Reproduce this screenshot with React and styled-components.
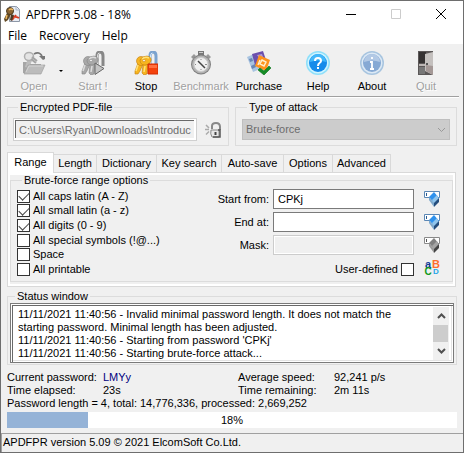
import React from 'react';
import styled, { createGlobalStyle, css } from 'styled-components';

const GlobalStyle = createGlobalStyle`
  * {
    box-sizing: border-box;
  }

  body {
    margin: 0;
    background-color: #f0f0f0;
    color: #000;
    font-family: 'Liberation Sans', sans-serif;
    font-size: 11px;
    line-height: 13px;
  }

  button, input, select, textarea {
    font: inherit;
    color: inherit;
  }
`;

const Window = styled.div`
  border: 1px solid #6e6e6e;
  background-color: #f0f0f0;
`;

const TitleBar = styled.header`
  height: 26px;
  padding-left: 3px;
  background-color: white;
  font-family: 'Open Sans', 'Noto Sans', sans-serif;
  font-size: 12px;

  display: flex;
  align-items: center;
  gap: 6px;
`;

const Title = styled.h1`
  flex: 1;
  margin: 0;
  font-size: 12px;
  font-weight: 400;
`;

const WindowControls = styled.div`
  display: flex;
`;

const WindowButton = styled.button`
  width: 45px;
  height: 24px;
  padding: 0;
  border: 0;
  background: none;

  display: flex;
  justify-content: center;
  align-items: center;
`;

const MenuBar = styled.nav`
  height: 17px;
  padding-left: 7px;
  background-color: white;
  font-family: 'Open Sans', 'Noto Sans', sans-serif;
  font-size: 12px;

  display: flex;
  gap: 12px;
`;

const MenuLink = styled.a`
  color: inherit;
  line-height: 17px;
  text-decoration: none;
`;

const Toolbar = styled.div`
  margin: 0 4px;
  padding: 7px 0 3px;
  border-bottom: 1px solid #a0a0a0;
  box-shadow: 0 1px white;

  display: grid;
  grid-template-columns: 58fr 60fr 46fr 64fr 52fr 66fr 42fr 66fr;
`;

const ToolButton = styled.button`
  min-width: 0;
  padding: 0;
  border: 0;
  background: none;
  white-space: nowrap;

  position: relative;
  display: flex;
  flex-direction: column;
  align-items: center;
  gap: 5px;

  &:disabled {
    color: #a0a0a0;
    text-shadow: 1px 1px white;
  }
`;

const DropMark = styled.span`
  border: 2px solid transparent;
  border-top-color: black;
  border-bottom: 0;

  position: absolute;
  top: 19px;
  right: 0;
`;

const Content = styled.main`
  padding: 4px 6px 5px;
`;

const Group = styled.fieldset`
  min-width: 0;
  margin: 0;
  padding: ${({ $padding }) => $padding};
  border: 1px solid #dcdcdc;

  legend {
    margin-left: 5px;
    padding: 0 2px;
  }
`;

const TopGroups = styled.div`
  margin-bottom: 6px;

  display: grid;
  grid-template-columns: 1fr 1fr;
  gap: 6px;
`;

const FileRow = styled.div`
  display: flex;
  align-items: center;
  gap: 8px;
`;

const FileInput = styled.input`
  flex: 1;
  min-width: 0;
  height: 23px;
  padding: 0 2px 0 5px;
  border: 1px solid #d0d0d0;
  background-color: #f0f0f0;
  box-shadow: inset 1px 1px white, inset -2px -2px white,
    inset 2px 2px #696969;

  &:disabled {
    color: #6d6d6d;
  }
`;

const IconButton = styled.button`
  padding: 0;
  border: 0;
  background: none;

  svg {
    display: block;
  }
`;

const SelectBox = styled.div`
  position: relative;

  svg {
    position: absolute;
    top: 8px;
    right: 4px;
    pointer-events: none;
  }
`;

const Select = styled.select`
  display: block;
  width: 100%;
  height: 21px;
  padding: 0 3px;
  border: 1px solid #bfbfbf;
  border-radius: 0;
  background-color: #cccccc;
  appearance: none;

  &:disabled {
    color: #6d6d6d;
    opacity: 1;
  }
`;

const TabList = styled.div`
  height: 20px;

  display: flex;
  align-items: flex-end;
`;

const Tab = styled.button`
  width: ${({ $width }) => $width}px;
  height: 18px;
  padding: 0;
  border: 1px solid #d9d9d9;
  border-width: 1px 1px 0 0;
  background-color: #f0f0f0;
  white-space: nowrap;

  ${({ $active }) =>
    $active &&
    css`
      height: 21px;
      margin-bottom: -1px;
      padding-bottom: 2px;
      border-left-width: 1px;
      background-color: white;
      z-index: 1;
    `}
`;

const TabPanel = styled.section`
  margin: 0 1px 3px 0;
  padding: 1px 2px 4px 2px;
  border: 1px solid #d9d9d9;
  box-shadow: inset 0 0 0 2px white;
`;

const RangeLayout = styled.div`
  display: flex;
  justify-content: space-between;
`;

const CheckList = styled.div`
  height: 88px;

  display: grid;
  grid-template-rows: repeat(6, 1fr);
`;

const CheckLabel = styled.label`
  white-space: nowrap;

  display: flex;
  flex-direction: ${({ $reverse }) => ($reverse ? 'row-reverse' : 'row')};
  align-items: center;
  gap: 3px;
`;

const Checkbox = styled.input`
  width: 13px;
  height: 13px;
  margin: 0;
  border: 1px solid #333;
  background-color: white;
  appearance: none;

  display: grid;
  place-items: center;

  &:checked::before {
    content: '';
    width: 9px;
    height: 5px;
    border: solid #444;
    border-width: 0 0 1px 1px;
    transform: translateY(-1px) rotate(-45deg);
  }
`;

const RangeForm = styled.div`
  display: grid;
  grid-template-columns: auto 141px 16px;
  grid-auto-rows: 20px;
  align-items: center;
  row-gap: 3px;
`;

const FieldLabel = styled.label`
  padding-right: 4px;
  text-align: right;
`;

const TextInput = styled.input`
  width: 100%;
  height: 20px;
  padding: 0 4px;
  border: 1px solid #7a7a7a;
  background-color: white;

  &:disabled {
    border-color: #cccccc;
    background-color: #f0f0f0;
    box-shadow: inset 0 0 0 1px white;
  }
`;

const UserDefined = styled.div`
  grid-column: 1 / 3;
  padding-top: 3px;

  display: flex;
  justify-content: flex-end;
`;

const FieldIcon = styled(IconButton)`
  margin-left: 10px;
`;

const LogBox = styled.div`
  height: 60px;
  padding: 3px 4px 2px 3px;
  border: 1px solid #7a7a7a;
  background-color: white;
  box-shadow: inset 1px 1px white, inset 2px 2px #696969,
    inset -1px -1px white, inset -2px -2px #e3e3e3;

  display: flex;
`;

const Log = styled.textarea`
  flex: 1;
  min-width: 0;
  padding: 1px 4px;
  border: 0;
  background: none;
  overflow: hidden;
  outline: 0;
  resize: none;
  white-space: pre;
`;

const ScrollBar = styled.div`
  width: 16px;
  background-color: #f0f0f0;

  display: flex;
  flex-direction: column;
`;

const ScrollButton = styled.button`
  height: 18px;
  padding: 0;
  border: 0;
  background: none;

  display: flex;
  justify-content: center;
  align-items: center;
`;

const ScrollTrack = styled.div`
  flex: 1;
`;

const ScrollThumb = styled.div`
  height: 17px;
  margin-right: 1px;
  background-color: #cdcdcd;
`;

const Stats = styled.dl`
  margin: 6px 0 2px;

  display: grid;
  grid-template-columns: 96fr 135fr 96fr 123fr;

  dt,
  dd {
    margin: 0;
    white-space: nowrap;
  }
`;

const Password = styled.dd`
  color: #000080;
`;

const Summary = styled.dt`
  grid-column: 1 / -1;
`;

const Progress = styled.div`
  height: 16px;
  background-color: white;

  display: grid;
  align-items: stretch;

  > * {
    grid-area: 1 / 1;
  }
`;

const ProgressFill = styled.div`
  background-color: #95b3d7;
`;

const ProgressText = styled.span`
  line-height: 16px;
  text-align: center;
`;

const StatusBar = styled.footer`
  height: 19px;
  padding: 2px 1px;
  border-top: 1px solid #a0a0a0;
  border-left: 1px solid #a0a0a0;
`;

const Keys = ({ gray }) => {
  const fill = gray ? '#a8a8a8' : '#f7b520';
  const light = gray ? '#dcdcdc' : '#ffe27a';
  const dark = gray ? '#858585' : '#c07c10';

  return (
    <>
      <path
        d='M16 14V5q0-4 3-4t3 4v10'
        fill='none'
        stroke={gray ? '#888' : '#7ba3cf'}
        strokeWidth='3'
      />
      <path
        d='M16.500 13V5q0-3 2-3'
        fill='none'
        stroke={gray ? '#ddd' : '#d5e8fa'}
        strokeWidth='1'
      />
      <g fill={fill} stroke={dark} strokeWidth='0.6'>
        <path d='M4 12 1 20l0 3 3 0 2-3 3-7z' />
        <path d='m9 13-1 9 2 2 3-1 1-10z' />
        <ellipse cx='7' cy='10' rx='4.500' ry='4.500' />
        <path d='M6 9q2-4 7-4 5 1 4 5t-6 4q-5 0-5-5z' />
      </g>
      <path
        d='M8 8q3-3 7-1M4 14l-2 6m9-5-1 6'
        fill='none'
        stroke={light}
        strokeWidth='1.500'
      />
      <circle cx='10' cy='9.500' r='1.200' fill='white' stroke={dark} strokeWidth='0.6' />
    </>
  );
};

const ToolIcon = ({ name }) => (
  <svg width='24' height='24' viewBox='0 0 24 24' aria-hidden='true'>
    {name === 'open' && (
      <>
        <path d='M1 11h6l2 2h10v9H1z' fill='#a6a6a6' />
        <path d='m5 10-2 6 3 1 4-7z' fill='#bdbdbd' />
        <ellipse cx='7' cy='5.500' rx='4.500' ry='4' fill='#e4e4e4' stroke='#b0b0b0' strokeWidth='1.500' />
        <path d='m9 8 5 4m-4-6 5 4' stroke='#a5a5a5' strokeWidth='2' />
        <path d='M12 3q5-3 8 2' fill='none' stroke='#777' strokeWidth='1.800' />
        <path d='M17 5h6v3l-2 1z' fill='#777' />
        <path d='M2 23 6 14h17l-4 9z' fill='#bcbcbc' stroke='#9c9c9c' strokeWidth='0.6' />
        <path d='m4 21 3-6h14' fill='none' stroke='#d3d3d3' />
      </>
    )}
    {name === 'start' && (
      <>
        <Keys gray />
        <path d='m14 12 9 5.500-9 6z' fill='#c4c4c4' stroke='#686868' />
      </>
    )}
    {name === 'stop' && (
      <>
        <Keys />
        <path d='M14 13h10v10H14z' fill='#f4420c' stroke='#d32c00' />
        <path d='M15 14h8v3h-8z' fill='#ff7040' />
      </>
    )}
    {name === 'benchmark' && (
      <>
        <path d='M9 0h6v4H9z' fill='#777' />
        <path d='M10 1h4v1h-4z' fill='#ccc' />
        <path d='m19 3 3 3-2 2-3-3zM5 3 2 6l2 2 3-3z' fill='#999' />
        <circle cx='12' cy='13.500' r='10' fill='#808080' />
        <circle cx='12' cy='13.500' r='9' fill='#b2b2b2' />
        <circle cx='12' cy='13.500' r='7' fill='#f0f0f0' stroke='#ccc' />
        <path d='m9 10 7 7' stroke='#444' strokeWidth='1.500' />
        <path d='M12 8v1m0 9v1m-6-5.500h1m9 0h2' stroke='#888' />
      </>
    )}
    {name === 'purchase' && (
      <>
        <path d='m0 6 7-3 6 15-7 3z' fill='#a9c4e1' />
        <path d='m2 8 3-1 1 3-3 1zm2 7 4-2 1 3-4 2z' fill='#6887b5' />
        <path d='m5 3 11-3 3 9-11 5z' fill='#6c50ad' />
        <path d='m10 4 5-1 1 3-4 1z' fill='#b09bd8' />
        <path d='m12 4 11 5-4 11-11-5z' fill='#ff931d' />
        <path
          d='m13 9-2 5m4-5 4 2-2 4-4-2z'
          fill='none'
          stroke='#fff0d0'
          strokeWidth='1.400'
        />
        <path
          d='m11 19 2-2 4 3 5-5 2 2-7 7z'
          fill='#168c26'
          stroke='#08721b'
          strokeWidth='0.6'
        />
      </>
    )}
    {(name === 'help' || name === 'about') && (
      <>
        <circle cx='12' cy='12' r='12' fill={name === 'help' ? '#8edffa' : '#a7c4df'} />
        <circle cx='12' cy='12' r='10.500' fill={name === 'help' ? '#cff5ff' : '#dce9f5'} />
        <circle cx='12' cy='12' r='9' fill={name === 'help' ? '#168bea' : '#86a9d4'} />
        <path
          d='M4 11a8 8 0 0 1 16 0q-8-3-16 0z'
          fill={name === 'help' ? '#42b8fa' : '#b2c9e5'}
        />
        {name === 'help' ? (
          <path
            d='M9 10q0-3 3-3t3 3q0 1-1.500 2T12 15m0 1v2'
            fill='none'
            stroke='white'
            strokeWidth='2'
          />
        ) : (
          <path
            d='M12 6v2m-2 3h2v7m-2 0h4'
            fill='none'
            stroke='white'
            strokeWidth='1.800'
          />
        )}
      </>
    )}
    {name === 'quit' && (
      <>
        <path d='M4 0h15v24H4z' fill='#5b5757' />
        <path d='M5 1h7v11H5z' fill='#353232' />
        <path d='M5 13h7v2H5z' fill='#bcb6b4' />
        <path d='M5 16h6v7H5z' fill='#777' />
        <path d='m11 3 8-2v23l-8-4z' fill='#c4c0be' />
        <path d='m12 14 7 1v9l-7-4z' fill='#a49896' />
        <path d='M12 12h2v2h-2z' fill='#555' />
      </>
    )}
  </svg>
);

const AppIcon = () => (
  <svg width='16' height='16' viewBox='0 0 16 16' aria-hidden='true'>
    <path d='M5.500 0.500h7l3 3v12h-10z' fill='#e8edf5' stroke='#8d97a6' />
    <path d='M12 0v4h4' fill='none' stroke='#a9b5c6' />
    <path
      d='m8 14 4-5m-3 2q3-1 6 1'
      fill='none'
      stroke='#d53a22'
      strokeWidth='2'
    />
    <path d='m3 7-3 6 1 3 3-2 3-6z' fill='#634923' />
    <path d='m7 8-1 6 2 1 2-6z' fill='#4a3925' />
    <ellipse cx='6' cy='5' rx='3.500' ry='3.500' fill='#8b6533' stroke='#4d3b22' />
    <path d='M5 4q2-2 4 0M3 9l-1 4' fill='none' stroke='#efb95f' strokeWidth='1.500' />
  </svg>
);

const LockIcon = () => (
  <svg width='16' height='18' viewBox='0 0 16 18' aria-hidden='true'>
    <path d='M7 8V5q0-3 4-3t4 4v3' fill='none' stroke='#888' strokeWidth='2' />
    <path d='M6 9h8v7H7q-2-3-1-7z' fill='#e7e7e7' stroke='#888' />
    <path d='M13 9h2v7H8' fill='none' stroke='#555' strokeWidth='1.500' />
    <path d='M10.500 11v3' stroke='#444' strokeWidth='2' />
    <path
      d='m1 4 3 3M0 8.500h4m-3 5 3-3'
      fill='none'
      stroke='#aaa'
      strokeWidth='1.500'
    />
  </svg>
);

const EraserIcon = ({ gray }) => (
  <svg width='16' height='16' viewBox='0 0 16 16' aria-hidden='true'>
    <path d='M0.500 0.500h15v6H0.500z' fill='white' stroke={gray ? '#8a8a8a' : '#5b87b5'} />
    <path d='M2.500 2v3' stroke={gray ? '#555' : '#285b91'} />
    <path d='m5 6 5-5 5 6-5 5z' fill={gray ? '#808080' : '#2e91ed'} />
    <path d='m8 9 5-5 2 4-5 5z' fill={gray ? '#a5a5a5' : '#8fc4ec'} />
    <path d='m5 6 5 6v4l-5-7z' fill={gray ? '#999' : '#7fa9cc'} />
    <path d='m10 12 5-5v4l-5 5z' fill={gray ? '#444' : '#244d7c'} />
  </svg>
);

const CharsetGrid = styled.span`
  width: 16px;
  font-family: 'Liberation Sans', sans-serif;
  font-weight: 700;
  line-height: 8px;

  display: grid;
  grid-template-columns: 8px 8px;
  grid-template-rows: 8px 8px;
`;

const Letter = styled.span`
  color: ${({ $color }) => $color};
  font-size: ${({ $size }) => $size}px;
`;

const CharsetIcon = () => (
  <CharsetGrid aria-hidden='true'>
    <Letter $color='#143c98' $size={11}>a</Letter>
    <Letter $color='#ff6d2d' $size={11}>B</Letter>
    <Letter $color='#109a20' $size={10}>C</Letter>
    <Letter $color='#25a5e9' $size={8}>D</Letter>
  </CharsetGrid>
);

const Chevron = ({ up, color = '#505050', stroke = 2 }) => (
  <svg width='9' height='6' viewBox='0 0 9 6' aria-hidden='true'>
    <path
      d={up ? 'M1 5l3.500-3.500L8 5' : 'M1 1l3.500 3.500L8 1'}
      fill='none'
      stroke={color}
      strokeWidth={stroke}
    />
  </svg>
);

const tools = [
  { icon: 'open', label: 'Open', disabled: true, drop: true },
  { icon: 'start', label: 'Start !', disabled: true },
  { icon: 'stop', label: 'Stop' },
  { icon: 'benchmark', label: 'Benchmark', disabled: true },
  { icon: 'purchase', label: 'Purchase' },
  { icon: 'help', label: 'Help' },
  { icon: 'about', label: 'About' },
  { icon: 'quit', label: 'Quit', disabled: true },
];

const tabs = [
  { label: 'Range', width: 47 },
  { label: 'Length', width: 43 },
  { label: 'Dictionary', width: 60 },
  { label: 'Key search', width: 65 },
  { label: 'Auto-save', width: 62 },
  { label: 'Options', width: 49 },
  { label: 'Advanced', width: 58 },
];

const charsets = [
  { label: 'All caps latin (A - Z)', checked: true },
  { label: 'All small latin (a - z)', checked: true },
  { label: 'All digits (0 - 9)', checked: true },
  { label: 'All special symbols (!@...)' },
  { label: 'Space' },
  { label: 'All printable' },
];

const fields = [
  { id: 'start', label: 'Start from:', value: 'CPKj' },
  { id: 'end', label: 'End at:', value: '' },
  { id: 'mask', label: 'Mask:', value: '', disabled: true },
];

const log = `11/11/2021 11:40:56 - Invalid minimal password length. It does not match the
starting password. Minimal length has been adjusted.
11/11/2021 11:40:56 - Starting from password 'CPKj'
11/11/2021 11:40:56 - Starting brute-force attack...`;

const progress = 18;

const App = () => {
  return (
    <>
      <GlobalStyle />
      <Window>
        <TitleBar>
          <AppIcon />
          <Title>APDFPR 5.08 - {progress}%</Title>
          <WindowControls>
            <WindowButton aria-label='Minimize'>
              <svg width='10' height='10'>
                <path d='M0 5.500h10' stroke='black' />
              </svg>
            </WindowButton>
            <WindowButton aria-label='Maximize' disabled>
              <svg width='10' height='10'>
                <path d='M0.500 0.500h9v9h-9z' fill='none' stroke='#ccc' />
              </svg>
            </WindowButton>
            <WindowButton aria-label='Close'>
              <svg width='10' height='10'>
                <path d='m0 0 10 10M10 0 0 10' stroke='black' />
              </svg>
            </WindowButton>
          </WindowControls>
        </TitleBar>
        <MenuBar>
          <MenuLink href='#file'>File</MenuLink>
          <MenuLink href='#recovery'>Recovery</MenuLink>
          <MenuLink href='#help'>Help</MenuLink>
        </MenuBar>
        <Toolbar>
          {tools.map(({ icon, label, disabled, drop }) => (
            <ToolButton key={icon} disabled={disabled}>
              <ToolIcon name={icon} />
              {label}
              {drop && <DropMark />}
            </ToolButton>
          ))}
        </Toolbar>
        <Content>
          <TopGroups>
            <Group $padding='4px 7px 4px 5px'>
              <legend>Encrypted PDF-file</legend>
              <FileRow>
                <FileInput
                  aria-label='Encrypted PDF-file'
                  defaultValue='C:\Users\Ryan\Downloads\Introduc'
                  disabled
                />
                <IconButton aria-label='Unlock'>
                  <LockIcon />
                </IconButton>
              </FileRow>
            </Group>
            <Group $padding='5px 6px'>
              <legend>Type of attack</legend>
              <SelectBox>
                <Select aria-label='Type of attack' disabled>
                  <option>Brute-force</option>
                </Select>
                <Chevron color='#999' stroke={1} />
              </SelectBox>
            </Group>
          </TopGroups>
          <TabList role='tablist'>
            {tabs.map(({ label, width }, index) => (
              <Tab
                key={label}
                role='tab'
                aria-selected={index === 0}
                $active={index === 0}
                $width={width}
              >
                {label}
              </Tab>
            ))}
          </TabList>
          <TabPanel role='tabpanel'>
            <Group $padding='2px 22px 3px 6px'>
              <legend>Brute-force range options</legend>
              <RangeLayout>
                <CheckList>
                  {charsets.map(({ label, checked }) => (
                    <CheckLabel key={label}>
                      <Checkbox type='checkbox' defaultChecked={checked} />
                      {label}
                    </CheckLabel>
                  ))}
                </CheckList>
                <RangeForm>
                  {fields.map(({ id, label, value, disabled }) => (
                    <React.Fragment key={id}>
                      <FieldLabel htmlFor={id}>{label}</FieldLabel>
                      <TextInput id={id} defaultValue={value} disabled={disabled} />
                      <FieldIcon aria-label={`Clear ${label}`}>
                        <EraserIcon gray={disabled} />
                      </FieldIcon>
                    </React.Fragment>
                  ))}
                  <UserDefined>
                    <CheckLabel $reverse>
                      <Checkbox type='checkbox' />
                      User-defined
                    </CheckLabel>
                  </UserDefined>
                  <FieldIcon aria-label='Custom charset'>
                    <CharsetIcon />
                  </FieldIcon>
                </RangeForm>
              </RangeLayout>
            </Group>
          </TabPanel>
          <Group $padding='0 2px 1px'>
            <legend>Status window</legend>
            <LogBox>
              <Log aria-label='Status window' value={log} readOnly />
              <ScrollBar>
                <ScrollButton aria-label='Scroll up'>
                  <Chevron up />
                </ScrollButton>
                <ScrollTrack>
                  <ScrollThumb />
                </ScrollTrack>
                <ScrollButton aria-label='Scroll down'>
                  <Chevron />
                </ScrollButton>
              </ScrollBar>
            </LogBox>
          </Group>
          <Stats>
            <dt>Current password:</dt>
            <Password>LMYy</Password>
            <dt>Average speed:</dt>
            <dd>92,241 p/s</dd>
            <dt>Time elapsed:</dt>
            <dd>23s</dd>
            <dt>Time remaining:</dt>
            <dd>2m 11s</dd>
            <Summary>
              Password length = 4, total: 14,776,336, processed: 2,669,252
            </Summary>
          </Stats>
          <Progress>
            <ProgressFill style={{ width: `${progress}%` }} />
            <ProgressText>{progress}%</ProgressText>
          </Progress>
        </Content>
        <StatusBar>APDFPR version 5.09 © 2021 ElcomSoft Co.Ltd.</StatusBar>
      </Window>
    </>
  );
};

export default App;
